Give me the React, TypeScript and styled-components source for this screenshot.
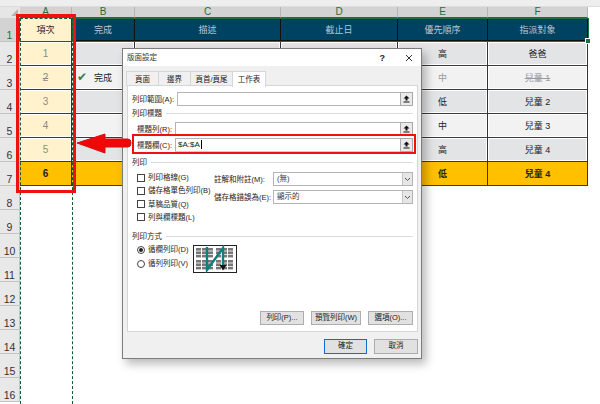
import React from "react";
import styled, { createGlobalStyle } from "styled-components";

const FONT = `"Liberation Sans", "Noto Sans CJK TC", sans-serif`;
const COLS = "20px 52px 63px 146px 117px 90px 100px 12px";

const Global = createGlobalStyle`
  html, body { margin: 0; padding: 0; background: #fff; }
  body { width: 600px; height: 404px; overflow: hidden; font-family: ${FONT}; }
`;

const Page = styled.div`
  position: relative;
  width: 600px;
  height: 404px;
  overflow: hidden;
  background: #fff;
`;

const TopStrip = styled.div`
  height: 6px;
  background: #eeeeee;
  border-bottom: 1px solid #dcdcdc;
`;

const Sheet = styled.div`
  display: grid;
  grid-template-columns: ${COLS};
  grid-template-rows: 11px 24px repeat(6, 24px) repeat(9, 24px);
`;

const Corner = styled.div`
  background: #e6e6e6;
  position: relative;
  &::after {
    content: "";
    position: absolute;
    right: 2px;
    bottom: 2px;
    border-left: 7px solid transparent;
    border-bottom: 7px solid #b4b4b4;
  }
`;

const ColHead = styled.div`
  background: #d3d3d3;
  color: #1f6e43;
  border-right: 1px solid #b5b5b5;
  border-bottom: 1px solid #1f6e43;
  font: 10px/10px "Liberation Sans", sans-serif;
  text-align: center;
`;

const RowHead = styled.div<{ $sel?: boolean }>`
  background: ${(p) => (p.$sel ? "#d3d3d3" : "#e8e8e8")};
  color: ${(p) => (p.$sel ? "#1f6e43" : "#333")};
  border-bottom: 1px solid #c4c4c4;
  border-right: 1px solid ${(p) => (p.$sel ? "#1f6e43" : "#c4c4c4")};
  font: 10.5px/12px "Liberation Sans", sans-serif;
  text-align: center;
  display: flex;
  align-items: flex-end;
  justify-content: center;
  padding-bottom: 0;
  box-sizing: border-box;
`;

const Cell = styled.div<{ $bg: string; $color?: string; $bold?: boolean; $strike?: boolean }>`
  position: relative;
  background: ${(p) => p.$bg};
  color: ${(p) => p.$color || "#222"};
  font-size: 9px;
  font-weight: ${(p) => (p.$bold ? 700 : 400)};
  text-decoration: ${(p) => (p.$strike ? "line-through" : "none")};
  border-right: 1px solid #333;
  border-bottom: 1px solid #3a3a3a;
  box-shadow: inset 0 0 0 1px ${(p) => (p.$bg === "#ffc000" ? "#ffc000" : "#fff")};
  box-sizing: border-box;
  display: flex;
  align-items: center;
  justify-content: center;
  min-width: 0;
`;

const IndexCell = styled(Cell)`
  font-size: 10px;
`;

const HeadCell = styled(Cell)`
  box-shadow: none;
  color: #b9c6cf;
  border-top: 1px solid #1f6e43;
  border-bottom: 2px solid #111;
  border-right: 1px solid #111;
`;

const TitleCell = styled(Cell)`
  box-shadow: none;
  background: #fff2cc;
  color: #222;
  border-bottom: 1px solid #1f5a3a;
`;

const Check = styled.span`
  position: absolute;
  left: 5px;
  top: 5px;
  color: #3f7f4f;
  font-size: 12px;
  line-height: 13px;
  font-family: "DejaVu Sans", sans-serif;
`;

const SelectionBorder = styled.div`
  position: absolute;
  left: 72px;
  top: 18px;
  width: 517px;
  height: 24px;
  box-sizing: border-box;
  border: 1px solid #1f6e43;
  &::after {
    content: "";
    position: absolute;
    right: -3px;
    bottom: -3px;
    width: 4px;
    height: 4px;
    background: #1f6e43;
    border: 1px solid #fff;
  }
`;

const Marquee = styled.div<{ $x: number }>`
  position: absolute;
  left: ${(p) => p.$x}px;
  top: 18px;
  bottom: 0;
  border-left: 1px dashed #0f5c33;
`;

const MarqueeTop = styled.div`
  position: absolute;
  left: 20px;
  top: 18px;
  width: 52px;
  border-top: 1px dashed #0f5c33;
`;

const RedBox = styled.div<{ $l: number; $t: number; $w: number; $h: number; $b: number }>`
  position: absolute;
  box-sizing: border-box;
  border: ${(p) => p.$b}px solid #ee1111;
  left: ${(p) => p.$l}px;
  top: ${(p) => p.$t}px;
  width: ${(p) => p.$w}px;
  height: ${(p) => p.$h}px;
  pointer-events: none;
`;

const ArrowSvg = styled.svg`
  position: absolute;
  left: 76px;
  top: 132px;
`;

/* Dialog */
const Dialog = styled.div`
  position: absolute;
  left: 122px;
  top: 48px;
  width: 300px;
  height: 311px;
  box-sizing: border-box;
  background: #f0f0f0;
  border: 1px solid #7c7c7c;
  box-shadow: 4px 5px 9px rgba(0, 0, 0, 0.28);
  display: flex;
  flex-direction: column;
  color: #222;
  font-size: 7.5px;
  line-height: 13px;
`;

const TitleBar = styled.div`
  height: 17px;
  background: #fff;
  display: flex;
  align-items: center;
  padding: 0 8px 0 4px;
  font-size: 7.5px;
  color: #333;
`;

const TitleText = styled.span`
  flex: 1;
`;

const TitleBtn = styled.span`
  color: #222;
  font: 700 9px "Liberation Sans", sans-serif;
  margin-left: 20px;
`;

const CloseIcon = styled.svg`
  margin-left: 20px;
`;

const Tabs = styled.div`
  display: flex;
  padding: 5px 0 0 4px;
  height: 20px;
  box-sizing: border-box;
`;

const Tab = styled.div<{ $active?: boolean; $w: number }>`
  width: ${(p) => p.$w}px;
  height: ${(p) => (p.$active ? 16 : 15)}px;
  box-sizing: border-box;
  background: ${(p) => (p.$active ? "#fff" : "#f0f0f0")};
  border: 1px solid #d6d6d6;
  border-bottom: ${(p) => (p.$active ? "none" : "1px solid #d6d6d6")};
  margin-left: -1px;
  text-align: center;
  font-size: 7.5px;
  line-height: 15px;
  color: #222;
  position: relative;
  z-index: ${(p) => (p.$active ? 1 : 0)};
`;

const Panel = styled.div`
  margin: -1px 3px 0 4px;
  height: 247px;
  box-sizing: border-box;
  background: #fff;
  border: 1px solid #d6d6d6;
  padding: 6px 4px 6px 4px;
  display: flex;
  flex-direction: column;
`;

const FieldRow = styled.div<{ $inset?: number; $top?: number }>`
  display: flex;
  align-items: center;
  height: 14px;
  padding-left: ${(p) => p.$inset || 0}px;
  margin-top: ${(p) => p.$top || 0}px;
`;

const FieldLabel = styled.span<{ $w: number }>`
  width: ${(p) => p.$w}px;
  flex: none;
  white-space: nowrap;
`;

const RefInput = styled.div<{ $focus?: boolean }>`
  flex: 1;
  height: 14px;
  box-sizing: border-box;
  background: #fff;
  border: 1px solid #b4b4b4;
  border-bottom-color: ${(p) => (p.$focus ? "#a8dde0" : "#b4b4b4")};
  border-right: none;
  padding-left: 2px;
  font-size: 8px;
  line-height: 12px;
  color: #222;
`;

const Caret = styled.span`
  border-left: 1px solid #000;
  margin-left: 1px;
`;

const PickBtn = styled.div`
  width: 13px;
  height: 14px;
  box-sizing: border-box;
  background: #eaeaea;
  border: 1px solid #a8a8a8;
  display: flex;
  align-items: center;
  justify-content: center;
`;

const Section = styled.div<{ $top?: number }>`
  display: flex;
  align-items: center;
  gap: 4px;
  height: 14px;
  margin-top: ${(p) => p.$top || 0}px;
  white-space: nowrap;
  &::after {
    content: "";
    flex: 1;
    border-top: 1px solid #dcdcdc;
  }
`;

const PrintGrid = styled.div`
  display: flex;
  padding: 3px 0 0 5px;
  height: 55px;
  box-sizing: border-box;
`;

const CheckCol = styled.div`
  width: 77px;
  flex: none;
  display: flex;
  flex-direction: column;
  margin-top: -1px;
`;

const CheckRow = styled.div`
  display: flex;
  align-items: center;
  gap: 3px;
  height: 13.7px;
  white-space: nowrap;
`;

const Box = styled.span`
  width: 8px;
  height: 8px;
  flex: none;
  box-sizing: border-box;
  border: 1px solid #444;
  background: #fff;
`;

const SelectCol = styled.div`
  flex: 1;
  display: flex;
  flex-direction: column;
  gap: 4px;
`;

const SelectRow = styled.div`
  display: flex;
  align-items: center;
  height: 14px;
`;

const SelectBox = styled.div`
  flex: 1;
  height: 14px;
  box-sizing: border-box;
  border: 1px solid #b4b4b4;
  padding-left: 3px;
  display: flex;
  align-items: center;
  justify-content: space-between;
  line-height: 12px;
  color: #333;
`;

const Chevron = styled.span`
  width: 9px;
  height: 12px;
  background: #e6e6e6;
  border-left: 1px solid #c4c4c4;
  display: flex;
  align-items: center;
  justify-content: center;
`;

const OrderArea = styled.div`
  display: flex;
  padding-left: 5px;
`;

const RadioCol = styled.div`
  width: 56px;
  flex: none;
  display: flex;
  flex-direction: column;
`;

const Radio = styled.span<{ $on?: boolean }>`
  width: 8px;
  height: 8px;
  flex: none;
  box-sizing: border-box;
  border: 1px solid #444;
  border-radius: 50%;
  background: #fff;
  position: relative;
  &::after {
    content: "";
    display: ${(p) => (p.$on ? "block" : "none")};
    position: absolute;
    inset: 1px;
    border-radius: 50%;
    background: #222;
  }
`;

const OrderIcon = styled.svg`
  margin-top: 2px;
`;

const PanelButtons = styled.div`
  margin-top: auto;
  display: flex;
  justify-content: flex-end;
  gap: 7px;
`;

const Button = styled.div<{ $w: number; $primary?: boolean }>`
  width: ${(p) => p.$w}px;
  height: ${(p) => (p.$primary !== undefined ? 15 : 14)}px;
  box-sizing: border-box;
  background: #e1e1e1;
  border: 1px solid ${(p) => (p.$primary ? "#0a6fd0" : "#adadad")};
  text-align: center;
  font-size: 7.5px;
  line-height: 12px;
  color: #222;
  white-space: nowrap;
`;

const Footer = styled.div`
  flex: 1;
  display: flex;
  justify-content: flex-end;
  gap: 7px;
  padding: 7px 3px 0 0;
`;

const rows = [
  { n: 2, bg: "#e2e4e6", a: "1", b: "", e: "高", f: "爸爸" },
  { n: 3, bg: "#f2f2f2", a: "2", b: "完成", e: "中", f: "兒童 1", done: true },
  { n: 4, bg: "#e2e4e6", a: "3", b: "", e: "低", f: "兒童 2" },
  { n: 5, bg: "#f2f2f2", a: "4", b: "", e: "中", f: "兒童 3" },
  { n: 6, bg: "#e2e4e6", a: "5", b: "", e: "高", f: "兒童 4" },
];

const Pick = () => (
  <PickBtn>
    <svg width="7" height="8" viewBox="0 0 7 8">
      <path d="M3.5 0.5 L6.5 3.5 H4.5 V5.5 H2.5 V3.5 H0.5 Z" fill="#111" />
      <rect x="0.5" y="6.5" width="6" height="1" fill="#111" />
    </svg>
  </PickBtn>
);

const Chev = () => (
  <Chevron>
    <svg width="7" height="5" viewBox="0 0 7 5">
      <path d="M1 1 L3.5 3.5 L6 1" stroke="#555" fill="none" />
    </svg>
  </Chevron>
);

const MiniPage = ({ x, y }: { x: number; y: number }) => (
  <g>
    {[0, 1, 2].map((c) =>
      [0, 1, 2].map((r) => (
        <rect key={`${c}${r}`} x={x + c * 6} y={y + r * 3.4} width="5" height="2.6" fill="#777" />
      ))
    )}
  </g>
);

export default function App() {
  return (
    <Page>
      <Global />
      <TopStrip />
      <Sheet>
        <Corner />
        {["A", "B", "C", "D", "E", "F"].map((c) => (
          <ColHead key={c}>{c}</ColHead>
        ))}
        <div />

        <RowHead $sel>1</RowHead>
        <TitleCell $bg="#fff2cc">項次</TitleCell>
        <HeadCell $bg="#004261">完成</HeadCell>
        <HeadCell $bg="#004261">描述</HeadCell>
        <HeadCell $bg="#004261">截止日</HeadCell>
        <HeadCell $bg="#004261">優先順序</HeadCell>
        <HeadCell $bg="#004261">指派對象</HeadCell>
        <div />

        {rows.map((r) => (
          <React.Fragment key={r.n}>
            <RowHead>{r.n}</RowHead>
            <IndexCell $bg="#fff2cc" $color="#8a8a8a" $strike={r.done}>{r.a}</IndexCell>
            <Cell $bg={r.bg}>
              {r.done && <Check>✔</Check>}
              {r.b}
            </Cell>
            <Cell $bg={r.bg} />
            <Cell $bg={r.bg} />
            <Cell $bg={r.bg} $color={r.done ? "#9a9a9a" : "#222"}>{r.e}</Cell>
            <Cell $bg={r.bg} $color={r.done ? "#9a9a9a" : "#222"} $strike={r.done}>{r.f}</Cell>
            <div />
          </React.Fragment>
        ))}

        <RowHead>7</RowHead>
        <IndexCell $bg="#ffc000" $bold>6</IndexCell>
        <Cell $bg="#ffc000" />
        <Cell $bg="#ffc000" />
        <Cell $bg="#ffc000" />
        <Cell $bg="#ffc000" $bold>低</Cell>
        <Cell $bg="#ffc000" $bold>兒童 4</Cell>
        <div />

        {[8, 9, 10, 11, 12, 13, 14, 15, 16].map((n) => (
          <React.Fragment key={n}>
            <RowHead>{n}</RowHead>
            <div style={{ gridColumn: "2 / -1" }} />
          </React.Fragment>
        ))}
      </Sheet>

      <SelectionBorder />
      <MarqueeTop />
      <Marquee $x={20} />
      <Marquee $x={72} />

      <Dialog>
        <TitleBar>
          <TitleText>版面設定</TitleText>
          <TitleBtn>?</TitleBtn>
          <CloseIcon width="8" height="8" viewBox="0 0 8 8">
            <path d="M1 1 L7 7 M7 1 L1 7" stroke="#333" strokeWidth="1" />
          </CloseIcon>
        </TitleBar>
        <Tabs>
          <Tab $w={33}>頁面</Tab>
          <Tab $w={33}>邊界</Tab>
          <Tab $w={43}>頁首/頁尾</Tab>
          <Tab $w={34} $active>工作表</Tab>
        </Tabs>
        <Panel>
          <FieldRow>
            <FieldLabel $w={45}>列印範圍(A):</FieldLabel>
            <RefInput />
            <Pick />
          </FieldRow>
          <Section>列印標題</Section>
          <FieldRow $inset={5} $top={2}>
            <FieldLabel $w={38}>標題列(R):</FieldLabel>
            <RefInput />
            <Pick />
          </FieldRow>
          <FieldRow $inset={5} $top={2}>
            <FieldLabel $w={38}>標題欄(C):</FieldLabel>
            <RefInput $focus>
              $A:$A<Caret />
            </RefInput>
            <Pick />
          </FieldRow>
          <Section $top={3}>列印</Section>
          <PrintGrid>
            <CheckCol>
              <CheckRow><Box />列印格線(G)</CheckRow>
              <CheckRow><Box />儲存格單色列印(B)</CheckRow>
              <CheckRow><Box />草稿品質(Q)</CheckRow>
              <CheckRow><Box />列與欄標題(L)</CheckRow>
            </CheckCol>
            <SelectCol>
              <SelectRow>
                <FieldLabel $w={59}>註解和附註(M):</FieldLabel>
                <SelectBox>(無)<Chev /></SelectBox>
              </SelectRow>
              <SelectRow>
                <FieldLabel $w={59}>儲存格錯誤為(E):</FieldLabel>
                <SelectBox>顯示的<Chev /></SelectBox>
              </SelectRow>
            </SelectCol>
          </PrintGrid>
          <Section $top={5}>列印方式</Section>
          <OrderArea>
            <RadioCol>
              <CheckRow><Radio $on />循欄列印(D)</CheckRow>
              <CheckRow><Radio />循列列印(V)</CheckRow>
            </RadioCol>
            <OrderIcon width="44" height="28" viewBox="0 0 44 28">
              <rect x="0.5" y="0.5" width="43" height="27" fill="#fff" stroke="#222" />
              <MiniPage x={3} y={3} />
              <MiniPage x={23} y={3} />
              <MiniPage x={3} y={15} />
              <MiniPage x={23} y={15} />
              <path d="M14 2 V25 L30 3 V22" fill="none" stroke="#0f7f80" strokeWidth="2.4" />
              <path d="M26.5 20 L30 25.5 L33.5 20 Z" fill="#111" />
            </OrderIcon>
          </OrderArea>
          <PanelButtons>
            <Button $w={44}>列印(P)...</Button>
            <Button $w={50}>預覽列印(W)</Button>
            <Button $w={45}>選項(O)...</Button>
          </PanelButtons>
        </Panel>
        <Footer>
          <Button $w={43} $primary>確定</Button>
          <Button $w={44} $primary={false}>取消</Button>
        </Footer>
      </Dialog>

      <RedBox $l={16} $t={14} $w={60} $h={179} $b={3} />
      <RedBox $l={132} $t={134} $w={284} $h={20} $b={2.5} />
      <ArrowSvg width="56" height="24" viewBox="0 0 56 24">
        <path d="M1 11 L29 2 V7 H52 Q55 7 55 11 Q55 15 52 15 H29 V21 Z" fill="#f00808" stroke="#d01010" strokeWidth="1" />
      </ArrowSvg>
    </Page>
  );
}
